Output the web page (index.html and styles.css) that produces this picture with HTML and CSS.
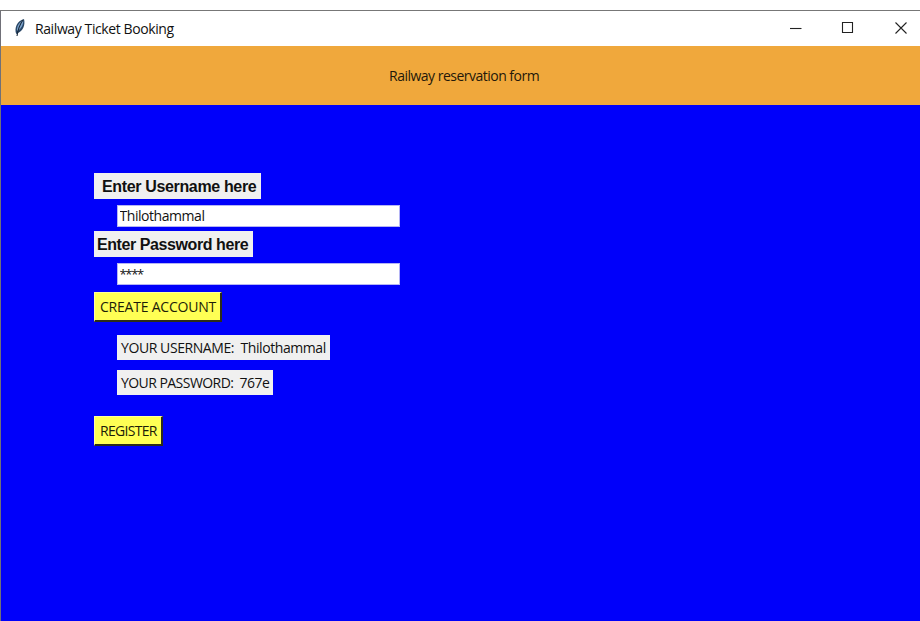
FILE: index.html
```html
<!DOCTYPE html>
<html lang="en">
<head>
<meta charset="utf-8">
<title>Railway Ticket Booking</title>
<link rel="stylesheet" href="styles.css">
</head>
<body>
<main class="window">
  <header class="titlebar">
    <svg class="feather" width="12" height="20" viewBox="0 0 12 20">
      <path d="M2.2 16C0 10 3 3 10 1c1.500 6-1 12-6 14z" fill="#294766"/>
      <path d="M3 13C2.500 9 5 4 9.200 2.500c.3 4.500-2.200 8.500-6.200 10.500z" fill="#7ea5cf"/>
      <path d="M9 2C6 6 4 11 3 18" fill="none" stroke="#182838" stroke-width="1.1"/>
    </svg>
    <span class="title">Railway Ticket Booking</span>
    <svg class="controls" width="120" height="14" viewBox="0 0 120 14" fill="none" stroke="#222" stroke-width="1.1">
      <path d="M0 7.500h11.500"/>
      <path d="M52.500 1.500h10v10h-10z"/>
      <path d="M105.500 1.500l11 11m0-11l-11 11"/>
    </svg>
  </header>
  <div class="banner"><span class="heading">Railway reservation form</span></div>
  <form class="form">
    <label class="label user" for="user">Enter Username here</label>
    <input class="field" id="user" type="text" value="Thilothammal">
    <label class="label pass" for="pass">Enter Password here</label>
    <input class="field masked" id="pass" type="text" value="****">
    <button class="button create" type="button">CREATE ACCOUNT</button>
    <output class="result name">YOUR USERNAME:&nbsp; Thilothammal</output>
    <output class="result code">YOUR PASSWORD:&nbsp; 767e</output>
    <button class="button register" type="button">REGISTER</button>
  </form>
</main>
</body>
</html>
```
FILE: styles.css
```css
* { box-sizing: border-box; }
body { margin: 0; background: #fff; overflow: hidden; }
.window {
  height: 611px;
  margin-top: 10px;
  border-top: 1px solid #777;
  border-left: 1px solid #707078;
  background: #0000fa;
  font: 14px/20px "Open Sans", "Noto Sans", sans-serif;
  color: #111;
  white-space: nowrap;
}
.titlebar { display: flex; align-items: center; height: 35px; padding-left: 13px; background: #fff; }
.feather { flex: none; margin-top: -2px; }
.title { width: 140px; margin-left: 9px; letter-spacing: -0.4px; }
.controls { margin-left: 615px; margin-top: -1px; flex: none; }
.banner { height: 59px; padding: 20px 0 0 388px; background: #f0a83c; color: #24180a; }
.heading { letter-spacing: -0.51px; }
.form { display: flex; flex-direction: column; align-items: flex-start; padding: 68px 0 0 93px; }
.label { height: 26px; background: #f0f0f0; font: bold 16px/27px "Liberation Sans", Arial, sans-serif; letter-spacing: -0.35px; }
.user { width: 167px; padding-left: 8px; }
.pass { width: 159px; padding-left: 3px; letter-spacing: -0.42px; }
.field {
  width: 283px; height: 22px; margin: 6px 0 4px 23px; padding: 0 2px 1px 1.5px;
  border: 1px solid #b4b4f4; background: #fff; color: #111;
  font: inherit; letter-spacing: -0.45px; outline: none;
}
.masked { margin-bottom: 7px; font-size: 13px; letter-spacing: -1.3px; }
.button {
  height: 30px; padding: 0 0 0 5px; text-align: left;
  border: 1px solid #ffff9c; border-right: 2px solid #2c2c18; border-bottom: 2px solid #2c2c18;
  background: #ffff54; color: #1c1c08; font: inherit;
}
.create { width: 128px; letter-spacing: -0.22px; }
.result { height: 25px; margin-left: 23px; padding-left: 4px; background: #f0f0f0; line-height: 25px; letter-spacing: -0.42px; }
.name { width: 213px; margin-top: 13px; }
.code { width: 156px; margin-top: 10px; letter-spacing: -0.55px; }
.register { width: 69px; margin-top: 21px; letter-spacing: -0.7px; }
```
